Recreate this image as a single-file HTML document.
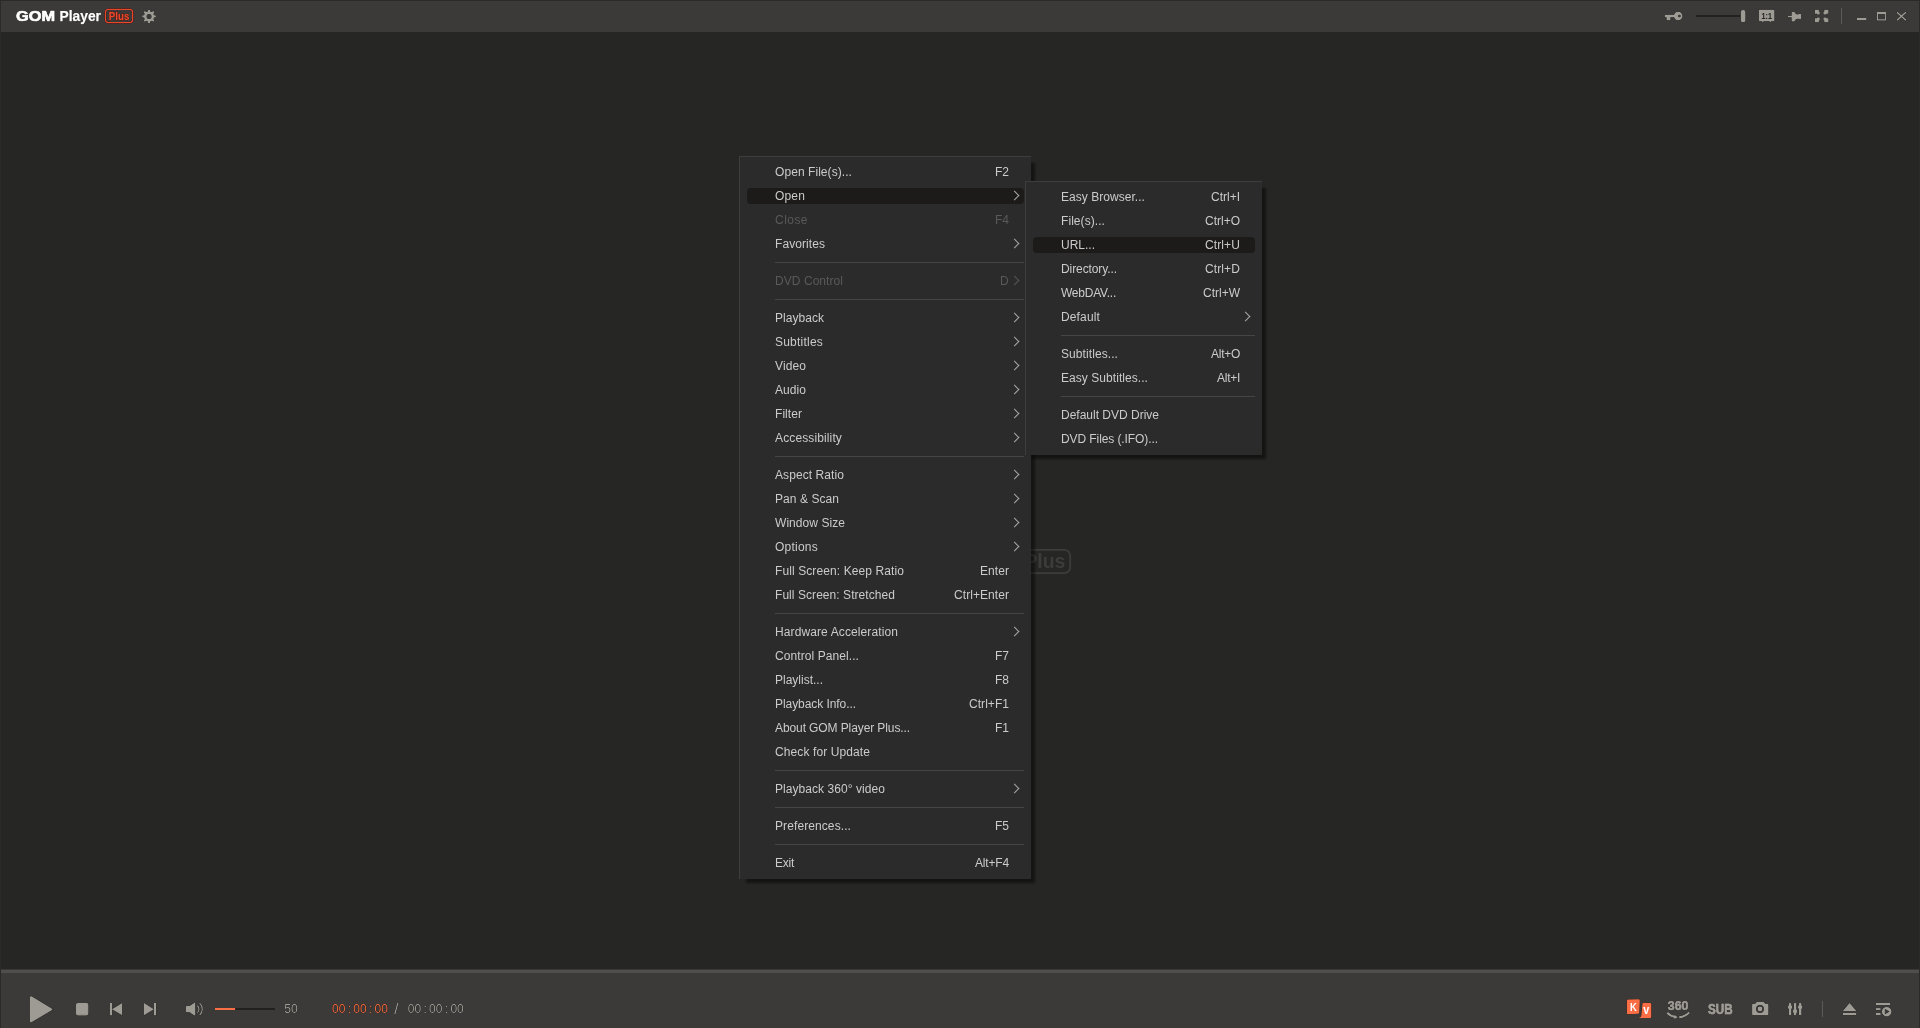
<!DOCTYPE html>
<html lang="en">
<head>
<meta charset="utf-8">
<title>GOM Player Plus</title>
<style>
*{box-sizing:border-box;margin:0;padding:0}
html,body{width:1920px;height:1028px;overflow:hidden;background:#262624}
body{position:relative;font-family:"Liberation Sans",sans-serif;font-size:12px;color:#dedede;-webkit-font-smoothing:antialiased}
#frame{position:absolute;left:0;top:0;width:1920px;height:1028px;background:#2a2a28}
#title{position:absolute;left:1px;top:1px;width:1918px;height:31px;background:#3b3a38}
#main{position:absolute;left:1px;top:32px;width:1918px;height:937px;background:#262624}
#seek{position:absolute;left:1px;top:969px;width:1918px;height:4px;background:#514f4c;border-top:1px solid #3a3937}
#bottom{position:absolute;left:1px;top:973px;width:1918px;height:55px;background:#3b3a38}
svg{position:absolute;left:0;top:0;overflow:visible}
svg.halo{filter:drop-shadow(0 0 .7px #1c1b1a) drop-shadow(0 0 .6px #1c1b1a) drop-shadow(0 0 .5px rgba(28,27,26,.8))}
.ic{fill:#9e9a94}
/* menus */
.menu{position:absolute;background:#2b2b2b;border-left:1px solid #3d3d3d;border-top:1px solid #3d3d3d;padding:3px 0 4px 0;box-shadow:5px 5px 2px -1.5px rgba(0,0,0,.45)}
.mi{position:relative;height:24px;line-height:24px;padding-left:35px;white-space:nowrap;color:#cbcbcb}
.mi.dis{color:#595959}
.mi.hl::before{content:"";position:absolute;left:7px;right:7px;top:4px;height:16px;border-radius:4px;background:#1c1b1a}
.mi span{position:relative}
.mi span.sc{position:absolute;right:22px;top:0}
.mi.sub::after{content:"";position:absolute;right:13px;top:8px;width:6px;height:6px;border-top:1px solid #a8a8a8;border-right:1px solid #a8a8a8;transform:rotate(45deg)}
.mi.dis.sub::after{border-color:#565656}
.sep{height:13px;position:relative}
.sep::before{content:"";position:absolute;left:35px;right:7px;top:6px;height:1px;background:#454545}
</style>
</head>
<body>
<div id="frame"></div>
<div id="title"></div>
<div id="main"></div>
<div id="seek"></div>
<div id="bottom"></div>

<svg class="halo" width="1920" height="1028" style="will-change:transform">
<g font-family="'Liberation Sans',sans-serif" font-weight="bold">
<text x="16" y="21" font-size="14.4" fill="#ffffff" stroke="#ffffff" stroke-width="0.7" textLength="39" lengthAdjust="spacingAndGlyphs">GOM</text>
<text x="59.6" y="21.1" font-size="14.3" fill="#ffffff" stroke="#ffffff" stroke-width="0.25" textLength="41.4" lengthAdjust="spacingAndGlyphs">Player</text>
<rect x="105.45" y="9.45" width="27.2" height="13.2" rx="3.3" ry="3.3" fill="none" stroke="#ea452b" stroke-width="1.3"/>
<text x="108.8" y="20.1" font-size="11.25" fill="#ef482c" stroke="#ef482c" stroke-width="0.3" textLength="20.5" lengthAdjust="spacingAndGlyphs">Plus</text>
</g>
<path class="ic" fill-rule="evenodd" d="M147.90 11.48 L148.19 9.65 L149.91 9.65 L150.20 11.48 L151.75 12.12 L153.25 11.04 L154.46 12.25 L153.38 13.75 L154.02 15.30 L155.85 15.59 L155.85 17.31 L154.02 17.60 L153.38 19.15 L154.46 20.65 L153.25 21.86 L151.75 20.78 L150.20 21.42 L149.91 23.25 L148.19 23.25 L147.90 21.42 L146.35 20.78 L144.85 21.86 L143.64 20.65 L144.72 19.15 L144.08 17.60 L142.25 17.31 L142.25 15.59 L144.08 15.30 L144.72 13.75 L143.64 12.25 L144.85 11.04 L146.35 12.12Z M146.55 16.45 a2.50 2.50 0 1 0 5.00 0 a2.50 2.50 0 1 0 -5.00 0Z"/>
</svg>
<svg class="halo" width="1920" height="1028" style="will-change:transform">
<!-- key -->
<path class="ic" fill-rule="evenodd" d="M1678.2 11.7a4.3 4.3 0 1 1 0 8.6a4.3 4.3 0 0 1 -4.1 -3.1H1670.4V20.3H1666.6V17.2H1665.3a0.6 0.6 0 0 1 -0.6 -0.6V15.4a0.6 0.6 0 0 1 0.6 -0.6H1674.1a4.3 4.3 0 0 1 4.1 -3.1Z M1679.4 14.7a1.3 1.3 0 1 0 0 2.6a1.3 1.3 0 0 0 0 -2.6Z"/>
<!-- zoom slider -->
<rect x="1696" y="15" width="50" height="2" fill="#222120"/>
<rect x="1740.8" y="10" width="4.6" height="12.2" rx="2" ry="2" class="ic"/>
<!-- 1:1 -->
<path class="ic" d="M1759.6 9.8H1773.6a0.8 0.8 0 0 1 0.8 0.8V20.4a0.8 0.8 0 0 1 -0.8 0.8H1770.9V22.2H1769.7V21.2H1763.4V22.2H1762.2V21.2H1759.6a0.8 0.8 0 0 1 -0.8 -0.8V10.6a0.8 0.8 0 0 1 0.8 -0.8Z"/>
<text x="1766.7" y="18.8" text-anchor="middle" font-family="'Liberation Sans',sans-serif" font-weight="bold" font-size="9.8" fill="#2a2927" stroke="#2a2927" stroke-width="0.12" textLength="10.4" lengthAdjust="spacingAndGlyphs">1:1</text>
<!-- pin -->
<path class="ic" d="M1787.9 15.9H1791.6V12.7a0.8 0.8 0 0 1 0.8 -0.8H1794.2a0.8 0.8 0 0 1 0.8 0.8Q1795.4 14.2 1797.3 14.4L1800.4 13.8a0.6 0.6 0 0 1 0.6 0.6V18.5a0.6 0.6 0 0 1 -0.6 0.6L1797.3 18.7Q1795.4 19 1795 20.6a0.8 0.8 0 0 1 -0.8 0.8H1792.4a0.8 0.8 0 0 1 -0.8 -0.8V17.3H1787.9Z"/>
<!-- fullscreen -->
<path class="ic" d="M1814.80 9.80 L1819.70 9.80 L1818.43 11.07 L1819.70 11.80 L1819.70 14.50 L1817.00 14.50 L1816.12 13.28 L1814.80 14.50Z M1828.40 9.80 L1823.50 9.80 L1824.77 11.07 L1823.50 11.80 L1823.50 14.50 L1826.20 14.50 L1827.08 13.28 L1828.40 14.50Z M1814.80 22.20 L1819.70 22.20 L1818.43 20.93 L1819.70 20.20 L1819.70 17.50 L1817.00 17.50 L1816.12 18.72 L1814.80 17.50Z M1828.40 22.20 L1823.50 22.20 L1824.77 20.93 L1823.50 20.20 L1823.50 17.50 L1826.20 17.50 L1827.08 18.72 L1828.40 17.50Z"/>
<!-- separator -->
<rect x="1841" y="8" width="1" height="16" fill="#5c5a57"/>
<!-- minimize / maximize / close -->
<rect x="1857" y="18" width="9.4" height="2.2" class="ic"/>
<path class="ic" fill-rule="evenodd" d="M1877 12H1886.2V20.4H1877Z M1878.1 14.1V19.3H1885.1V14.1Z"/>
<path d="M1897 12.3L1905.9 20.2M1905.9 12.3L1897 20.2" stroke="#9e9a94" stroke-width="1.5" fill="none"/>
</svg>
<svg width="1920" height="1028" style="will-change:transform">
<g font-family="'Liberation Sans',sans-serif" font-weight="bold" fill="#3c3c3a">
<text x="862" y="570.4" font-size="25.7" stroke="#3c3c3a" stroke-width="1.2" textLength="69.7" lengthAdjust="spacingAndGlyphs">GOM</text>
<text x="941.2" y="569.7" font-size="22" textLength="72" lengthAdjust="spacingAndGlyphs">Player</text>
<rect x="1021.9" y="549.9" width="48.3" height="23.3" rx="6" ry="6" fill="none" stroke="#3c3c3a" stroke-width="1.8"/>
<text x="1024.4" y="568.4" font-size="20.5" textLength="41" lengthAdjust="spacingAndGlyphs">Plus</text>
</g>
</svg>
<svg class="halo" width="1920" height="1028" style="will-change:transform">
<g class="ic" stroke="#9e9a94" stroke-linejoin="round">
<path stroke-width="2" d="M31 997.2V1021.4L51.2 1009.3Z"/>
<rect x="76.6" y="1003.6" width="11.2" height="11.2" rx="1.2" stroke-width="1.2"/>
</g>
<g class="ic">
<rect x="110" y="1003" width="2.1" height="12.3"/>
<path d="M112 1009.15L122.2 1003V1015.3Z"/>
<path d="M144 1003L153.9 1009.15L144 1015.3Z"/>
<rect x="154" y="1003" width="2.1" height="12.3"/>
<!-- speaker -->
<path d="M186.8 1006H189.6L194.4 1002.7a0.6 0.6 0 0 1 0.9 0.5V1014.9a0.6 0.6 0 0 1 -0.9 0.5L189.6 1012.2H186.8a0.8 0.8 0 0 1 -0.8 -0.8V1006.8a0.8 0.8 0 0 1 0.8 -0.8Z"/>
</g>
<g fill="none" stroke="#9e9a94" stroke-width="1.1">
<path d="M197.3 1005.6A4.6 4.6 0 0 1 197.3 1012.7"/>
<path d="M199.6 1003.2A8 8 0 0 1 199.6 1015.1"/>
</g>
<rect x="215" y="1008" width="60" height="2" fill="#222120"/>
<rect x="215" y="1008" width="20.1" height="2" fill="#f96e45"/>
<g font-family="'Liberation Sans',sans-serif" font-size="12">
<text x="284.2" y="1013" font-size="12.4" fill="#9e9a94" textLength="13.6" lengthAdjust="spacingAndGlyphs">50</text>
<text x="332" y="1013" fill="#ee6a40">00<tspan dx="2.3">:</tspan><tspan dx="2.3">00</tspan><tspan dx="2.3">:</tspan><tspan dx="2.3">00</tspan></text>
<text x="394.3" y="1014.4" fill="#9e9a94" font-size="15">/</text>
<text x="407.8" y="1013" fill="#9e9a94">00<tspan dx="2.3">:</tspan><tspan dx="2.3">00</tspan><tspan dx="2.3">:</tspan><tspan dx="2.3">00</tspan></text>
</g>
</svg>
<svg class="halo" width="1920" height="1028" style="will-change:transform">
<!-- KV -->
<path fill="#f96e45" d="M1628.3 999.5L1638.6 999.2a1.2 1.2 0 0 1 1.2 1.3L1639.3 1012.5a1.2 1.2 0 0 1 -1.2 1.2L1628.2 1014.2a1.3 1.3 0 0 1 -1.3 -1.3V1000.8a1.3 1.3 0 0 1 1.4 -1.3Z"/>
<path fill="#f96e45" d="M1643.6 1002.8L1650 1003a1.3 1.3 0 0 1 1.3 1.3V1016.8a1.3 1.3 0 0 1 -1.3 1.3H1638.2C1640.4 1017.6 1641.2 1016.8 1641.3 1015.6L1642.4 1004a1.3 1.3 0 0 1 1.2 -1.2Z"/>
<g font-family="'Liberation Sans',sans-serif" font-weight="bold" fill="#ffffff">
<text x="1630" y="1010.7" font-size="10.6" textLength="6.8" lengthAdjust="spacingAndGlyphs">K</text>
<text x="1643.3" y="1013.8" font-size="12.4" textLength="6" lengthAdjust="spacingAndGlyphs">v</text>
<!-- 360 -->
<text x="1667.8" y="1009.7" font-size="12" fill="#9e9a94" stroke="#9e9a94" stroke-width="0.7" textLength="20.6" lengthAdjust="spacingAndGlyphs">360</text>
<!-- SUB -->
<text x="1708" y="1014.2" font-size="13.9" fill="#9e9a94" stroke="#9e9a94" stroke-width="0.95" textLength="24.6" lengthAdjust="spacingAndGlyphs">SUB</text>
</g>
<g fill="none" stroke="#9e9a94" stroke-width="2.1">
<path d="M1667.2 1012.7Q1670.5 1016.3 1676 1017.1"/>
<path d="M1679.2 1017.4Q1685.5 1016.6 1689.2 1012.4"/>
</g>
<path class="ic" d="M1674.6 1015.1L1677.9 1017.3L1674.2 1018.9Z"/>
<!-- camera -->
<path class="ic" fill-rule="evenodd" d="M1753.3 1003.7H1755.3L1756.2 1002.4a1 1 0 0 1 0.8 -0.5H1763.4a1 1 0 0 1 0.8 0.5L1765.1 1003.7H1767.2a1.2 1.2 0 0 1 1.2 1.2V1013.9a1.2 1.2 0 0 1 -1.2 1.2H1753.3a1.2 1.2 0 0 1 -1.2 -1.2V1004.9a1.2 1.2 0 0 1 1.2 -1.2Z M1760 1005a3.9 3.9 0 1 0 0 7.8a3.9 3.9 0 0 0 0 -7.8Z M1760 1006.5a2.4 2.4 0 1 1 0 4.8a2.4 2.4 0 0 1 0 -4.8Z"/>
<!-- equalizer -->
<g class="ic">
<rect x="1788.8" y="1003" width="2.5" height="12.2" rx="0.8"/>
<rect x="1793.8" y="1003" width="2.5" height="12.2" rx="0.8"/>
<rect x="1798.9" y="1003" width="2.5" height="12.2" rx="0.8"/>
<rect x="1787.9" y="1005.2" width="4.3" height="3.7" rx="1.6"/>
<rect x="1792.9" y="1009.3" width="4.3" height="3.7" rx="1.6"/>
<rect x="1798" y="1005.2" width="4.3" height="3.7" rx="1.6"/>
</g>
<rect x="1822" y="1001" width="1" height="16" fill="#5c5a57"/>
<!-- eject -->
<path class="ic" d="M1849.6 1003L1856.4 1010.9H1842.8Z"/>
<rect class="ic" x="1843" y="1013" width="13.3" height="2.1"/>
<!-- playlist -->
<g class="ic">
<rect x="1876" y="1003" width="14" height="2"/>
<rect x="1876" y="1008.1" width="4.6" height="2"/>
<rect x="1876" y="1013" width="4.6" height="2"/>
<path fill-rule="evenodd" d="M1886.7 1006.9a4.8 4.8 0 1 1 0 9.6a4.8 4.8 0 0 1 0 -9.6Z M1884.9 1008.9V1014.3L1889.6 1011.6Z"/>
</g>
</svg>

<div class="menu" style="left:739px;top:156px;width:292px">
<div class="mi"><span style="letter-spacing:0.065px">Open File(s)...</span><span class="sc" style="letter-spacing:-0.008px">F2</span></div>
<div class="mi sub hl"><span style="letter-spacing:0.160px">Open</span></div>
<div class="mi dis"><span style="letter-spacing:0.463px">Close</span><span class="sc" style="letter-spacing:-0.008px">F4</span></div>
<div class="mi sub"><span style="letter-spacing:0.071px">Favorites</span></div>
<div class="sep"></div>
<div class="mi dis sub"><span style="letter-spacing:0.058px">DVD Control</span><span class="sc" style="letter-spacing:0.328px">D</span></div>
<div class="sep"></div>
<div class="mi sub"><span style="letter-spacing:0.037px">Playback</span></div>
<div class="mi sub"><span style="letter-spacing:0.219px">Subtitles</span></div>
<div class="mi sub"><span style="letter-spacing:0.103px">Video</span></div>
<div class="mi sub"><span style="letter-spacing:0.059px">Audio</span></div>
<div class="mi sub"><span style="letter-spacing:0.055px">Filter</span></div>
<div class="mi sub"><span style="letter-spacing:0.126px">Accessibility</span></div>
<div class="sep"></div>
<div class="mi sub"><span style="letter-spacing:0.079px">Aspect Ratio</span></div>
<div class="mi sub"><span style="letter-spacing:0.062px">Pan &amp; Scan</span></div>
<div class="mi sub"><span style="letter-spacing:0.058px">Window Size</span></div>
<div class="mi sub"><span style="letter-spacing:0.234px">Options</span></div>
<div class="mi"><span style="letter-spacing:0.099px">Full Screen: Keep Ratio</span><span class="sc" style="letter-spacing:0.062px">Enter</span></div>
<div class="mi"><span style="letter-spacing:0.058px">Full Screen: Stretched</span><span class="sc" style="letter-spacing:0.064px">Ctrl+Enter</span></div>
<div class="sep"></div>
<div class="mi sub"><span style="letter-spacing:0.108px">Hardware Acceleration</span></div>
<div class="mi"><span style="letter-spacing:0.080px">Control Panel...</span><span class="sc" style="letter-spacing:-0.008px">F7</span></div>
<div class="mi"><span>Playlist...</span><span class="sc" style="letter-spacing:-0.008px">F8</span></div>
<div class="mi"><span style="letter-spacing:-0.065px">Playback Info...</span><span class="sc" style="letter-spacing:0.045px">Ctrl+F1</span></div>
<div class="mi"><span style="letter-spacing:-0.100px">About GOM Player Plus...</span><span class="sc" style="letter-spacing:-0.008px">F1</span></div>
<div class="mi"><span style="letter-spacing:0.101px">Check for Update</span></div>
<div class="sep"></div>
<div class="mi sub"><span style="letter-spacing:0.059px">Playback 360° video</span></div>
<div class="sep"></div>
<div class="mi"><span style="letter-spacing:0.093px">Preferences...</span><span class="sc" style="letter-spacing:-0.008px">F5</span></div>
<div class="sep"></div>
<div class="mi"><span style="letter-spacing:-0.254px">Exit</span><span class="sc" style="letter-spacing:-0.169px">Alt+F4</span></div>
</div>
<div class="menu" style="left:1025px;top:181px;width:237px">
<div class="mi"><span style="letter-spacing:0.042px">Easy Browser...</span><span class="sc">Ctrl+I</span></div>
<div class="mi"><span style="letter-spacing:0.066px">File(s)...</span><span class="sc">Ctrl+O</span></div>
<div class="mi hl"><span>URL...</span><span class="sc" style="letter-spacing:0.109px">Ctrl+U</span></div>
<div class="mi"><span style="letter-spacing:-0.094px">Directory...</span><span class="sc" style="letter-spacing:0.109px">Ctrl+D</span></div>
<div class="mi"><span style="letter-spacing:-0.238px">WebDAV...</span><span class="sc">Ctrl+W</span></div>
<div class="mi sub"><span style="letter-spacing:0.138px">Default</span></div>
<div class="sep"></div>
<div class="mi"><span style="letter-spacing:0.081px">Subtitles...</span><span class="sc" style="letter-spacing:-0.272px">Alt+O</span></div>
<div class="mi"><span style="letter-spacing:0.056px">Easy Subtitles...</span><span class="sc" style="letter-spacing:-0.272px">Alt+I</span></div>
<div class="sep"></div>
<div class="mi"><span>Default DVD Drive</span></div>
<div class="mi"><span style="letter-spacing:-0.088px">DVD Files (.IFO)...</span></div>
</div>
</body>
</html>
